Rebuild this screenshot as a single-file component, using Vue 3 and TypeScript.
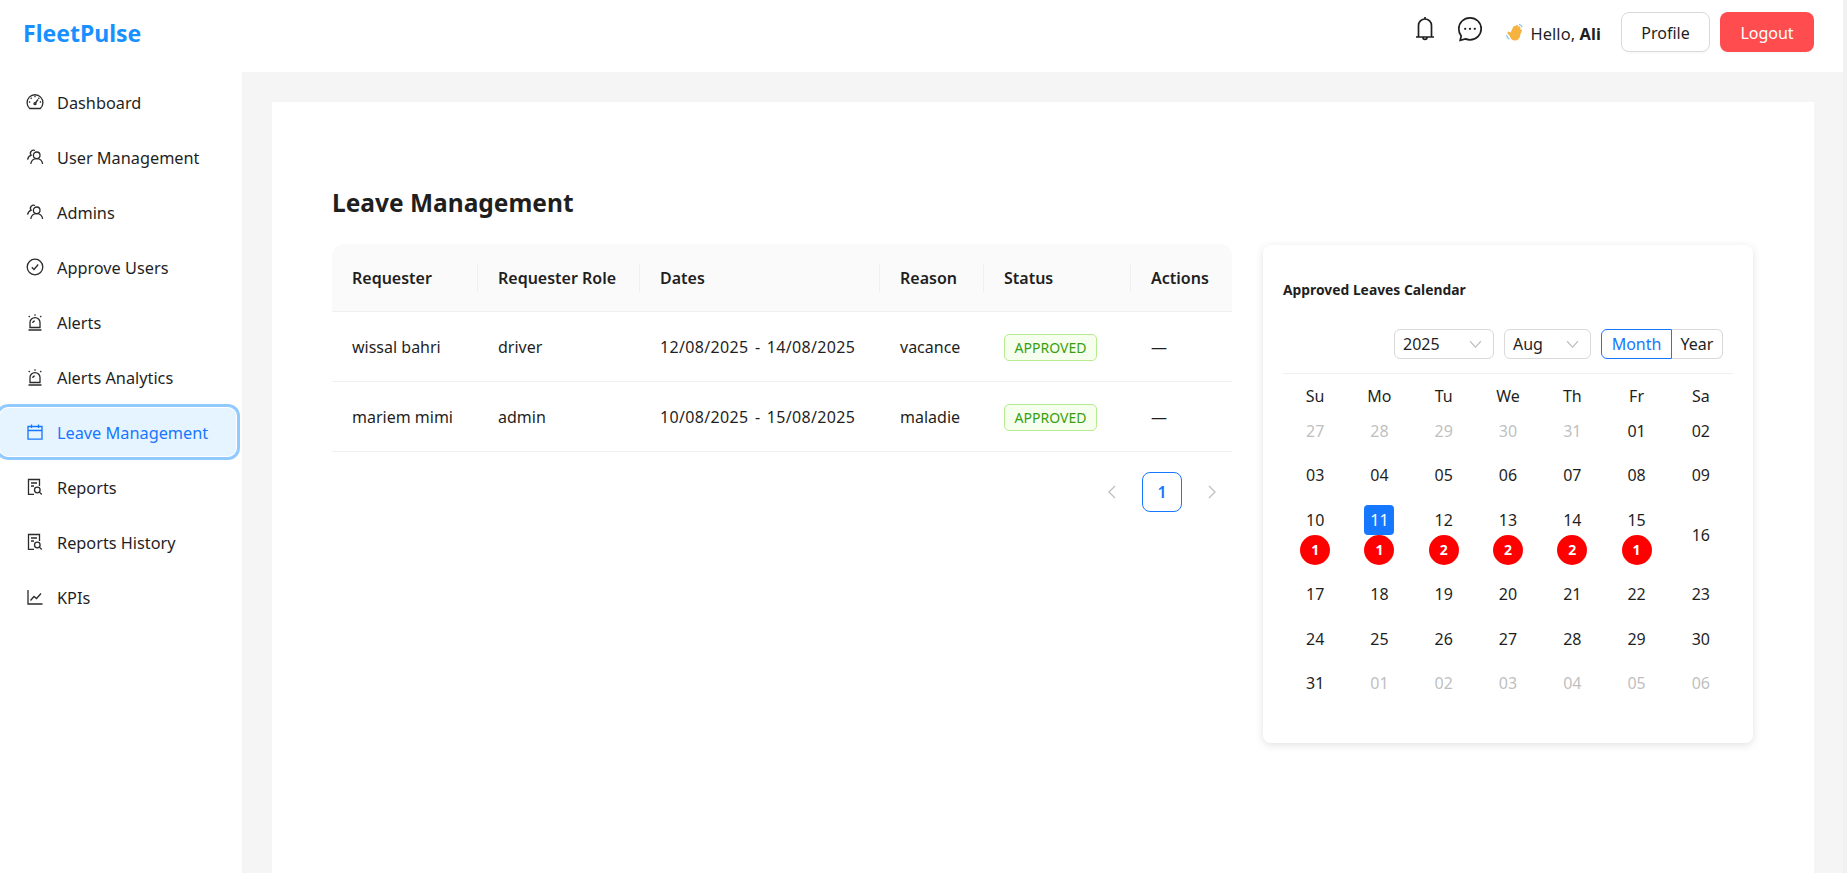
<template>
  <div class="shell">
    <div class="frame">
      <header class="topbar">
        <div class="logo">FleetPulse</div>
        <div class="top-actions">
          <svg class="top-icon bell" viewBox="0 0 20 26" aria-hidden="true">
            <path d="M3.500 21V9.500a6.500 6.500 0 0 1 13 0V21M1 21h18M10 1v2M8 21.500c0 2.600 4 2.600 4 0" />
          </svg>
          <svg class="top-icon chat" viewBox="0 0 26 26" aria-hidden="true">
            <path d="M13 1.800c6.200 0 11.200 4.900 11.200 11s-5 11-11.200 11c-1.600 0-3.100-.3-4.500-.9l-5.300 1.500 1-4.400A10.900 10.900 0 0 1 1.800 12.800c0-6.100 5-11 11.200-11z" />
            <circle class="dot" cx="8.200" cy="12.800" r="1.150" />
            <circle class="dot" cx="13" cy="12.800" r="1.150" />
            <circle class="dot" cx="17.800" cy="12.800" r="1.150" />
          </svg>
          <svg class="wave" viewBox="0 0 20 20" aria-hidden="true">
            <g class="wave-fingers">
              <path d="M7 11l3-6.500M9.500 11l3-7.500M12 12l3-7M14 13l2.500-5M7 13.500 4 10.500" />
            </g>
            <circle class="wave-palm" cx="10.500" cy="13" r="5.500" />
            <path class="wave-lines" d="M14.500 1.500q2.500.5 3.800 3M1.500 12.500q.5 3 3 4.500" />
          </svg>
          <span class="hello">Hello, <b>Ali</b></span>
          <button class="btn btn-profile" type="button">Profile</button>
          <button class="btn btn-logout" type="button">Logout</button>
        </div>
      </header>

      <div class="body-row">
        <aside class="sidebar">
          <nav class="menu">
            <a
              v-for="item in menu"
              :key="item.label"
              class="menu-item"
              :class="{ 'menu-item--active': item.label === 'Leave Management' }"
            >
              <svg class="menu-icon" viewBox="0 0 18 18" aria-hidden="true">
                <template v-if="item.icon === 'dash'">
                  <path d="M3.700 15.500A7.900 7.900 0 1 1 14.300 15.500z" />
                  <path d="M9 10.500 12 6.500M2.900 9h1.300M13.800 9h1.300M9 3v1.300M4.700 4.800l.9.900M12.400 4.800l.9.900" />
                  <circle cx="9" cy="10.700" r="1" />
                </template>
                <template v-else-if="item.icon === 'team'">
                  <circle cx="10.700" cy="7.300" r="3.300" />
                  <path d="M4.800 16c.3-3.200 2.800-5.400 5.900-5.400s5.600 2.200 5.900 5.400" />
                  <path d="M9 2.500A3.200 3.200 0 0 0 5.200 3.300c-1.100 1.200-1 2.800 0 3.800C3.200 7.900 1.900 9.600 1.600 11.600" />
                </template>
                <template v-else-if="item.icon === 'check'">
                  <circle cx="9" cy="9" r="7.800" />
                  <path d="M5.800 9.300 8 11.500l4.200-5" />
                </template>
                <template v-else-if="item.icon === 'alert'">
                  <path d="M4 14.500V9.600a5 5 0 0 1 10 0v4.900z" />
                  <path d="M2.500 17h13M9 1.200v1.600M2.700 3l1.100 1.100M15.300 3l-1.100 1.100M6.700 10a2.200 2.200 0 0 1 2-2" />
                </template>
                <template v-else-if="item.icon === 'calendar'">
                  <path d="M2 3.500h14v12.700H2zM2 7.500h14M5.500 1.500v3.500M12.500 1.500v3.500" />
                </template>
                <template v-else-if="item.icon === 'report'">
                  <path d="M8 16.300H2.500V1.500h11v6.500" />
                  <path d="M5 5h6M5 8h3" />
                  <circle cx="11.300" cy="12" r="2.800" />
                  <path d="M13.400 14.100l2.400 2.400" />
                </template>
                <template v-else>
                  <path d="M2 2v14h14.500" />
                  <path d="M4.500 12.500 8 8.500l2.500 2 4.500-5" />
                </template>
              </svg>
              <span class="menu-label">{{ item.label }}</span>
            </a>
          </nav>
        </aside>

        <main class="content">
          <section class="panel">
            <h2 class="page-title">Leave Management</h2>
            <div class="columns">
              <div class="table-col">
                <table class="leave-table">
                  <thead>
                    <tr>
                      <th v-for="col in columns" :key="col">{{ col }}</th>
                    </tr>
                  </thead>
                  <tbody>
                    <tr v-for="row in leaves" :key="row.name">
                      <td>{{ row.name }}</td>
                      <td>{{ row.role }}</td>
                      <td class="dates-cell">{{ row.dates }}</td>
                      <td>{{ row.reason }}</td>
                      <td><span class="tag">APPROVED</span></td>
                      <td>—</td>
                    </tr>
                  </tbody>
                </table>
                <div class="pager">
                  <span class="pager-arrow">
                    <svg viewBox="0 0 12 16" aria-hidden="true"><path d="M9 2 3 8l6 6" /></svg>
                  </span>
                  <span class="pager-num">1</span>
                  <span class="pager-arrow">
                    <svg viewBox="0 0 12 16" aria-hidden="true"><path d="M3 2l6 6-6 6" /></svg>
                  </span>
                </div>
              </div>

              <aside class="cal-card">
                <h3 class="cal-title">Approved Leaves Calendar</h3>
                <div class="cal-controls">
                  <span class="select select-year">
                    2025
                    <svg viewBox="0 0 12 8" aria-hidden="true"><path d="M1 1l5 5.500L11 1" /></svg>
                  </span>
                  <span class="select select-month">
                    Aug
                    <svg viewBox="0 0 12 8" aria-hidden="true"><path d="M1 1l5 5.500L11 1" /></svg>
                  </span>
                  <span class="mode-group">
                    <span class="mode mode--on">Month</span>
                    <span class="mode">Year</span>
                  </span>
                </div>
                <div class="cal-grid">
                  <div v-for="d in weekdays" :key="d" class="cal-head">{{ d }}</div>
                  <div v-for="cell in cells" :key="cell.key" class="cal-cell">
                    <span
                      class="cal-date"
                      :class="{ 'cal-date--off': cell.off, 'cal-date--today': cell.today }"
                    >{{ cell.label }}</span>
                    <span v-if="cell.count" class="cal-badge">{{ cell.count }}</span>
                  </div>
                </div>
              </aside>
            </div>
          </section>
        </main>
      </div>
    </div>
    <div class="scroll-track"></div>
  </div>
</template>

<script setup lang="ts">
type IconName = 'dash' | 'team' | 'check' | 'alert' | 'calendar' | 'report' | 'chart'

const menu: { label: string; icon: IconName }[] = [
  { label: 'Dashboard', icon: 'dash' },
  { label: 'User Management', icon: 'team' },
  { label: 'Admins', icon: 'team' },
  { label: 'Approve Users', icon: 'check' },
  { label: 'Alerts', icon: 'alert' },
  { label: 'Alerts Analytics', icon: 'alert' },
  { label: 'Leave Management', icon: 'calendar' },
  { label: 'Reports', icon: 'report' },
  { label: 'Reports History', icon: 'report' },
  { label: 'KPIs', icon: 'chart' },
]

const columns = ['Requester', 'Requester Role', 'Dates', 'Reason', 'Status', 'Actions']

const leaves = [
  { name: 'wissal bahri', role: 'driver', dates: '12/08/2025 - 14/08/2025', reason: 'vacance' },
  { name: 'mariem mimi', role: 'admin', dates: '10/08/2025 - 15/08/2025', reason: 'maladie' },
]

const weekdays = ['Su', 'Mo', 'Tu', 'We', 'Th', 'Fr', 'Sa']

const counts: Record<number, number> = { 10: 1, 11: 1, 12: 2, 13: 2, 14: 2, 15: 1 }
const pad = (n: number) => String(n).padStart(2, '0')

const cells = [
  ...[27, 28, 29, 30, 31].map((n) => ({ key: `p${n}`, label: pad(n), off: true, today: false, count: 0 })),
  ...Array.from({ length: 31 }, (_, i) => ({
    key: `c${i + 1}`,
    label: pad(i + 1),
    off: false,
    today: i + 1 === 11,
    count: counts[i + 1] ?? 0,
  })),
  ...[1, 2, 3, 4, 5, 6].map((n) => ({ key: `n${n}`, label: pad(n), off: true, today: false, count: 0 })),
]
</script>

<style>
html,
body {
  margin: 0;
  overflow: hidden;
}
</style>

<style scoped>
.shell {
  display: flex;
  height: 100vh;
  overflow: hidden;
  font-family: 'Noto Sans', 'Open Sans', sans-serif;
  font-size: 16px;
  color: #1f1f1f;
  background: #fff;
}
.frame {
  flex: 1;
  min-width: 0;
  display: flex;
  flex-direction: column;
}
.scroll-track {
  width: 4px;
  background: #f1f1f1;
}

.topbar {
  height: 72px;
  flex: none;
  display: flex;
  align-items: center;
  justify-content: space-between;
  padding: 0 29px 8px 23px;
  box-sizing: border-box;
}
.logo {
  font-size: 23px;
  font-weight: 700;
  color: #1890ff;
  margin-top: 1px;
}
.top-actions {
  display: flex;
  align-items: center;
}
.top-icon {
  fill: none;
  stroke: #1f1f1f;
  stroke-width: 1.700;
}
.bell {
  width: 20px;
  height: 26px;
  margin-right: 22px;
  margin-top: -6px;
}
.chat {
  width: 26px;
  height: 26px;
  margin-right: 22px;
  margin-top: -6px;
}
.dot {
  fill: #1f1f1f;
  stroke: none;
}
.wave {
  width: 19px;
  height: 19px;
  margin-right: 6px;
}
.wave-fingers path {
  fill: none;
  stroke: #f6b33f;
  stroke-width: 2.800;
  stroke-linecap: round;
}
.wave-palm {
  fill: #f6b33f;
}
.wave-lines {
  fill: none;
  stroke: #8ec6ee;
  stroke-width: 1.300;
}
.hello {
  margin-right: 20px;
  padding-top: 2px;
  font-size: 16.400px;
  letter-spacing: 0.1px;
}
.btn {
  height: 40px;
  padding: 2px 0 0;
  border-radius: 8px;
  font: inherit;
  box-shadow: 0 2px 0 rgba(0, 0, 0, 0.02);
}
.btn-profile {
  width: 89px;
  background: #fff;
  border: 1px solid #d9d9d9;
  color: #1f1f1f;
  margin-right: 10px;
}
.btn-logout {
  width: 94px;
  background: #ff4d4f;
  border: none;
  color: #fff;
}

.body-row {
  flex: 1;
  min-height: 0;
  display: flex;
}
.sidebar {
  width: 242px;
  flex: none;
  background: #fff;
  box-sizing: border-box;
  padding: 6px 6px 0 0;
}
.menu {
  display: flex;
  flex-direction: column;
  gap: 7px;
}
.menu-item {
  height: 48px;
  display: flex;
  align-items: center;
  gap: 13px;
  padding-left: 26px;
  border-radius: 8px;
  font-size: 16.300px;
  color: #1f1f1f;
}
.menu-label {
  padding-top: 1px;
}
.menu-icon {
  width: 18px;
  height: 18px;
  flex: none;
  fill: none;
  stroke: #2b2b2b;
  stroke-width: 1.300;
}
.menu-item--active {
  background: #e6f4ff;
  color: #1677ff;
  outline: 3px solid #91caff;
  outline-offset: 1px;
}
.menu-item--active .menu-icon {
  stroke: #1677ff;
}

.content {
  flex: 1;
  min-width: 0;
  background: #f5f5f5;
  padding: 30px 29px 0 30px;
  display: flex;
}
.panel {
  flex: 1;
  min-width: 0;
  background: #fff;
  box-sizing: border-box;
  padding: 83px 61px 0 60px;
}
.page-title {
  margin: 0 0 23px;
  font-size: 24.500px;
  line-height: 36px;
  font-weight: 700;
}
.columns {
  display: flex;
  gap: 31px;
  align-items: flex-start;
}
.table-col {
  flex: 1;
  min-width: 0;
}

.leave-table {
  width: 100%;
  table-layout: fixed;
  border-collapse: separate;
  border-spacing: 0;
}
.leave-table th:nth-child(1) { width: 146px; }
.leave-table th:nth-child(2) { width: 162px; }
.leave-table th:nth-child(3) { width: 240px; }
.leave-table th:nth-child(4) { width: 104px; }
.leave-table th:nth-child(5) { width: 147px; }
.leave-table th {
  position: relative;
  box-sizing: border-box;
  height: 68px;
  padding: 1px 0 0 20px;
  background: #fafafa;
  border-bottom: 1px solid #f0f0f0;
  text-align: left;
  font-weight: 600;
}
.leave-table th:first-child {
  border-top-left-radius: 12px;
}
.leave-table th:last-child {
  border-top-right-radius: 12px;
}
.leave-table th:not(:last-child)::after {
  content: '';
  position: absolute;
  top: 20px;
  right: 0;
  height: 28px;
  width: 1px;
  background: #f0f0f0;
}
.leave-table td {
  box-sizing: border-box;
  height: 70px;
  padding: 1px 0 0 20px;
  border-bottom: 1px solid #f0f0f0;
  white-space: nowrap;
}
.dates-cell {
  letter-spacing: 0.35px;
  word-spacing: 1.800px;
}
.tag {
  display: inline-block;
  box-sizing: border-box;
  width: 93px;
  height: 27px;
  line-height: 25px;
  text-align: center;
  font-size: 14px;
  color: #389e0d;
  background: #f6ffed;
  border: 1px solid #b7eb8f;
  border-radius: 5px;
}
.pager {
  display: flex;
  justify-content: flex-end;
  gap: 10px;
  margin-top: 20px;
}
.pager-arrow {
  width: 40px;
  height: 40px;
  display: flex;
  align-items: center;
  justify-content: center;
}
.pager-arrow svg {
  width: 12px;
  height: 16px;
  fill: none;
  stroke: #bfbfbf;
  stroke-width: 1.300;
}
.pager-num {
  width: 40px;
  height: 40px;
  box-sizing: border-box;
  display: flex;
  align-items: center;
  justify-content: center;
  border: 1px solid #1677ff;
  border-radius: 8px;
  color: #1677ff;
  font-weight: 600;
}

.cal-card {
  width: 490px;
  flex: none;
  box-sizing: border-box;
  height: 498px;
  margin-top: 1px;
  padding: 34px 20px 0;
  background: #fff;
  border-radius: 8px;
  box-shadow: 0 2px 8px rgba(0, 0, 0, 0.12);
}
.cal-title {
  margin: 0;
  font-size: 13.850px;
  line-height: 22px;
  font-weight: 700;
}
.cal-controls {
  display: flex;
  justify-content: flex-end;
  gap: 10px;
  margin-top: 28px;
  padding-right: 10px;
}
.select {
  box-sizing: border-box;
  height: 30px;
  display: flex;
  align-items: center;
  justify-content: space-between;
  padding: 0 11px 0 8px;
  border: 1px solid #d9d9d9;
  border-radius: 6px;
}
.select svg {
  width: 13px;
  height: 9px;
  fill: none;
  stroke: #bfbfbf;
  stroke-width: 1.100;
}
.select-year {
  width: 100px;
}
.select-month {
  width: 87px;
}
.mode-group {
  display: flex;
  height: 30px;
}
.mode {
  box-sizing: border-box;
  height: 30px;
  line-height: 28px;
  text-align: center;
  width: 51px;
  border: 1px solid #d9d9d9;
  border-left: none;
  border-radius: 0 6px 6px 0;
}
.mode--on {
  width: 71px;
  border: 1px solid #1677ff;
  border-radius: 6px 0 0 6px;
  color: #1677ff;
}
.cal-grid {
  display: grid;
  grid-template-columns: repeat(7, 1fr);
  margin-top: 14px;
  border-top: 1px solid #f0f0f0;
  padding-top: 12px;
}
.cal-head {
  height: 22.500px;
  line-height: 21px;
  text-align: center;
}
.cal-cell {
  padding: 7.250px 0;
  display: flex;
  flex-direction: column;
  align-items: center;
  justify-content: center;
}
.cal-date {
  width: 30px;
  height: 30px;
  line-height: 30px;
  text-align: center;
  border-radius: 4px;
}
.cal-date--off {
  color: #bfbfbf;
}
.cal-date--today {
  background: #1677ff;
  color: #fff;
}
.cal-badge {
  width: 30px;
  height: 30px;
  border-radius: 50%;
  background: #f00;
  color: #fff;
  font-size: 14px;
  font-weight: 700;
  line-height: 30px;
  text-align: center;
}
</style>
